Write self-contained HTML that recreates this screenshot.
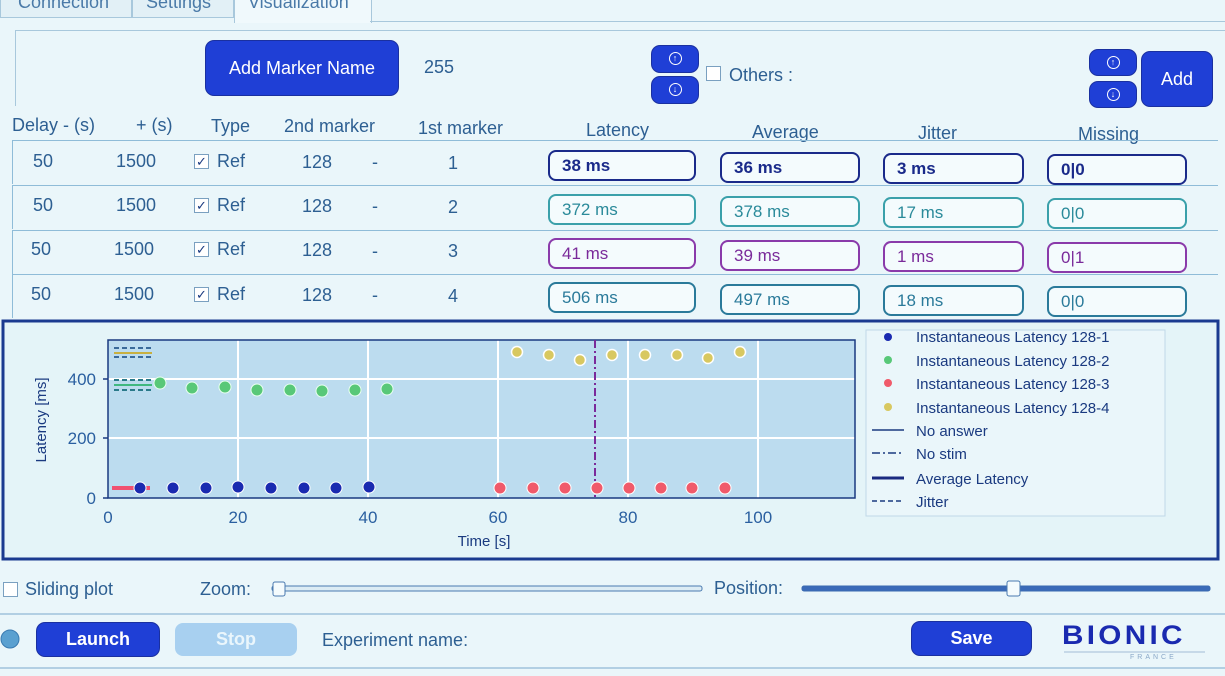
<!DOCTYPE html>
<html><head><meta charset="utf-8"><style>
body{margin:0;width:1225px;height:676px;background:#eaf6fa;font-family:"Liberation Sans",sans-serif;color:#2d5f92;position:relative;overflow:hidden}
.a{position:absolute;white-space:nowrap}
.btn{position:absolute;background:#1f3fd6;color:#fff;border-radius:8px;font-weight:bold;text-align:center;box-shadow:0 0 0 1px #1a30a0}
.box{position:absolute;height:31px;border:2px solid;border-radius:8px;box-sizing:border-box;font-size:17px;line-height:27px;padding-left:12px;background:#f4fbfd}
.row{position:absolute;left:12px;width:1205px;height:43px;border-top:1px solid #8fbcd8;border-left:1px solid #8fbcd8}
.cb{position:absolute;width:13px;height:13px;border:1px solid #7aa0c0;background:#fff;font-size:13px;line-height:13px;text-align:center;color:#1a3a80}
.t{font-size:18px}
.ic{display:inline-block;width:11px;height:11px;border:1.5px solid #fff;border-radius:50%;font-size:9px;line-height:11px;vertical-align:middle}
</style></head><body>
<div class="a" style="left:0;top:-10px;width:130px;height:26px;border:1px solid #a8c8dc;background:#e2f0f6"></div>
<div class="a t" style="left:18px;top:-8px;color:#4a7aa8">Connection</div>
<div class="a" style="left:132px;top:-10px;width:100px;height:26px;border:1px solid #a8c8dc;background:#e2f0f6"></div>
<div class="a t" style="left:146px;top:-8px;color:#4a7aa8">Settings</div>
<div class="a" style="left:234px;top:-10px;width:136px;height:32px;border:1px solid #a8c8dc;border-bottom:none;background:#f0f9fc"></div>
<div class="a t" style="left:248px;top:-8px;color:#4a7aa8">Visualization</div>
<div class="a" style="left:370px;top:21px;width:855px;border-top:1px solid #a8c8dc"></div>
<div class="a" style="left:15px;top:30px;width:1210px;height:75px;border-top:1px solid #a8c8dc;border-left:1px solid #a8c8dc"></div>

<div class="btn" style="left:206px;top:41px;width:192px;height:54px;line-height:54px;font-size:18px;font-weight:normal">Add Marker Name</div>
<div class="a t" style="left:424px;top:57px;color:#2d5f92">255</div>
<div class="btn" style="left:652px;top:46px;width:46px;height:26px;line-height:26px"><span class="ic">↑</span></div>
<div class="btn" style="left:652px;top:77px;width:46px;height:26px;line-height:26px"><span class="ic">↓</span></div>
<div class="cb" style="left:706px;top:66px"></div>
<div class="a t" style="left:729px;top:65px">Others :</div>
<div class="btn" style="left:1090px;top:50px;width:46px;height:25px;line-height:25px"><span class="ic">↑</span></div>
<div class="btn" style="left:1090px;top:82px;width:46px;height:25px;line-height:25px"><span class="ic">↓</span></div>
<div class="btn" style="left:1142px;top:52px;width:70px;height:54px;line-height:54px;font-size:18px;font-weight:normal">Add</div>

<div class="a t" style="left:12px;top:115px">Delay - (s)</div>
<div class="a t" style="left:136px;top:115px">+ (s)</div>
<div class="a t" style="left:211px;top:116px">Type</div>
<div class="a t" style="left:284px;top:116px">2nd marker</div>
<div class="a t" style="left:418px;top:118px">1st marker</div>
<div class="a t" style="left:586px;top:120px">Latency</div>
<div class="a t" style="left:752px;top:122px">Average</div>
<div class="a t" style="left:918px;top:123px">Jitter</div>
<div class="a t" style="left:1078px;top:124px">Missing</div>

<div class="row" style="top:140px"></div>
<div class="row" style="top:185px"></div>
<div class="row" style="top:230px"></div>
<div class="row" style="top:274px"></div>

<div class="a t" style="left:33px;top:151px">50</div><div class="a t" style="left:116px;top:151px">1500</div>
<div class="cb" style="left:194px;top:154px">✓</div><div class="a t" style="left:217px;top:151px">Ref</div>
<div class="a t" style="left:302px;top:152px">128</div><div class="a t" style="left:372px;top:152px">-</div><div class="a t" style="left:448px;top:153px">1</div>
<div class="box" style="left:548px;top:150px;width:148px;color:#1a2a8a;border-color:#1a2a8a;font-weight:bold">38 ms</div>
<div class="box" style="left:720px;top:152px;width:140px;color:#1a2a8a;border-color:#1a2a8a;font-weight:bold">36 ms</div>
<div class="box" style="left:883px;top:153px;width:141px;color:#1a2a8a;border-color:#1a2a8a;font-weight:bold">3 ms</div>
<div class="box" style="left:1047px;top:154px;width:140px;color:#1a2a8a;border-color:#1a2a8a;font-weight:bold">0|0</div>
<div class="a t" style="left:33px;top:195px">50</div><div class="a t" style="left:116px;top:195px">1500</div>
<div class="cb" style="left:194px;top:198px">✓</div><div class="a t" style="left:217px;top:195px">Ref</div>
<div class="a t" style="left:302px;top:196px">128</div><div class="a t" style="left:372px;top:196px">-</div><div class="a t" style="left:448px;top:197px">2</div>
<div class="box" style="left:548px;top:194px;width:148px;color:#2a8a9a;border-color:#3aa0aa">372 ms</div>
<div class="box" style="left:720px;top:196px;width:140px;color:#2a8a9a;border-color:#3aa0aa">378 ms</div>
<div class="box" style="left:883px;top:197px;width:141px;color:#2a8a9a;border-color:#3aa0aa">17 ms</div>
<div class="box" style="left:1047px;top:198px;width:140px;color:#2a8a9a;border-color:#3aa0aa">0|0</div>
<div class="a t" style="left:31px;top:239px">50</div><div class="a t" style="left:114px;top:239px">1500</div>
<div class="cb" style="left:194px;top:242px">✓</div><div class="a t" style="left:217px;top:239px">Ref</div>
<div class="a t" style="left:302px;top:240px">128</div><div class="a t" style="left:372px;top:241px">-</div><div class="a t" style="left:448px;top:241px">3</div>
<div class="box" style="left:548px;top:238px;width:148px;color:#7a2a9a;border-color:#8a3aaa">41 ms</div>
<div class="box" style="left:720px;top:240px;width:140px;color:#7a2a9a;border-color:#8a3aaa">39 ms</div>
<div class="box" style="left:883px;top:241px;width:141px;color:#7a2a9a;border-color:#8a3aaa">1 ms</div>
<div class="box" style="left:1047px;top:242px;width:140px;color:#7a2a9a;border-color:#8a3aaa">0|1</div>
<div class="a t" style="left:31px;top:284px">50</div><div class="a t" style="left:114px;top:284px">1500</div>
<div class="cb" style="left:194px;top:287px">✓</div><div class="a t" style="left:217px;top:284px">Ref</div>
<div class="a t" style="left:302px;top:285px">128</div><div class="a t" style="left:372px;top:285px">-</div><div class="a t" style="left:448px;top:286px">4</div>
<div class="box" style="left:548px;top:282px;width:148px;color:#2a7a9a;border-color:#2a7a9a">506 ms</div>
<div class="box" style="left:720px;top:284px;width:140px;color:#2a7a9a;border-color:#2a7a9a">497 ms</div>
<div class="box" style="left:883px;top:285px;width:141px;color:#2a7a9a;border-color:#2a7a9a">18 ms</div>
<div class="box" style="left:1047px;top:286px;width:140px;color:#2a7a9a;border-color:#2a7a9a">0|0</div>

<svg class="a" style="left:0;top:0" width="1225" height="676" font-family="Liberation Sans, sans-serif">
<rect x="3" y="321" width="1215" height="238" fill="#e4f4f8" stroke="#1a3a90" stroke-width="3"/>
<rect x="108" y="340" width="747" height="158" fill="#bcdcef"/>
<g stroke="#fff" stroke-width="2">
<line x1="238" y1="340" x2="238" y2="498"/><line x1="368" y1="340" x2="368" y2="498"/><line x1="498" y1="340" x2="498" y2="498"/><line x1="628" y1="340" x2="628" y2="498"/><line x1="758" y1="340" x2="758" y2="498"/>
<line x1="108" y1="379" x2="855" y2="379"/><line x1="108" y1="438" x2="855" y2="438"/>
</g>
<rect x="108" y="340" width="747" height="158" fill="none" stroke="#1a3a80" stroke-width="1.5"/>
<g stroke="#1a3a80" stroke-width="1.5"><line x1="103" y1="379" x2="108" y2="379"/><line x1="103" y1="438" x2="108" y2="438"/><line x1="103" y1="498" x2="108" y2="498"/></g>
<g fill="#2a5fa0" font-size="17" text-anchor="end"><text x="96" y="385">400</text><text x="96" y="444">200</text><text x="96" y="504">0</text></g>
<g fill="#2a5fa0" font-size="17" text-anchor="middle"><text x="108" y="523">0</text><text x="238" y="523">20</text><text x="368" y="523">40</text><text x="498" y="523">60</text><text x="628" y="523">80</text><text x="758" y="523">100</text></g>
<text x="484" y="546" fill="#1a3a80" font-size="15" text-anchor="middle">Time [s]</text>
<text transform="translate(46,420) rotate(-90)" fill="#1a3a80" font-size="15" text-anchor="middle">Latency [ms]</text>
<g stroke-width="2"><line x1="114" y1="348" x2="152" y2="348" stroke="#3a6a9a" stroke-dasharray="5 3"/><line x1="114" y1="353" x2="152" y2="353" stroke="#c8b040"/><line x1="114" y1="357" x2="152" y2="357" stroke="#3a6a9a" stroke-dasharray="5 3"/>
<line x1="114" y1="380" x2="152" y2="380" stroke="#2a7a8a" stroke-dasharray="5 3"/><line x1="114" y1="385" x2="152" y2="385" stroke="#40b880"/><line x1="114" y1="390" x2="152" y2="390" stroke="#2a7a8a" stroke-dasharray="5 3"/>
<line x1="112" y1="488" x2="150" y2="488" stroke="#f05070" stroke-width="4"/></g>
<line x1="595" y1="340" x2="595" y2="498" stroke="#7a2a9a" stroke-width="2" stroke-dasharray="8 3 2 3"/>
<g fill="#1a2ab0" stroke="#fff" stroke-width="1"><circle cx="140" cy="488" r="6"/><circle cx="173" cy="488" r="6"/><circle cx="206" cy="488" r="6"/><circle cx="238" cy="487" r="6"/><circle cx="271" cy="488" r="6"/><circle cx="304" cy="488" r="6"/><circle cx="336" cy="488" r="6"/><circle cx="369" cy="487" r="6"/></g>
<g fill="#58c878" stroke="#e8fff0" stroke-width="1"><circle cx="160" cy="383" r="6"/><circle cx="192" cy="388" r="6"/><circle cx="225" cy="387" r="6"/><circle cx="257" cy="390" r="6"/><circle cx="290" cy="390" r="6"/><circle cx="322" cy="391" r="6"/><circle cx="355" cy="390" r="6"/><circle cx="387" cy="389" r="6"/></g>
<g fill="#f05a6a" stroke="#fff" stroke-width="1"><circle cx="500" cy="488" r="6"/><circle cx="533" cy="488" r="6"/><circle cx="565" cy="488" r="6"/><circle cx="597" cy="488" r="6"/><circle cx="629" cy="488" r="6"/><circle cx="661" cy="488" r="6"/><circle cx="692" cy="488" r="6"/><circle cx="725" cy="488" r="6"/></g>
<g fill="#d8c860" stroke="#fff" stroke-width="1.5"><circle cx="517" cy="352" r="5.5"/><circle cx="549" cy="355" r="5.5"/><circle cx="580" cy="360" r="5.5"/><circle cx="612" cy="355" r="5.5"/><circle cx="645" cy="355" r="5.5"/><circle cx="677" cy="355" r="5.5"/><circle cx="708" cy="358" r="5.5"/><circle cx="740" cy="352" r="5.5"/></g>
<rect x="866" y="330" width="299" height="186" fill="#eaf6fa" stroke="#c0d8e8"/>
<g font-size="15" fill="#1a3a80">
<circle cx="888" cy="337" r="4" fill="#1a2ab0"/><text x="916" y="342">Instantaneous Latency 128-1</text>
<circle cx="888" cy="360" r="4" fill="#58c878"/><text x="916" y="366">Instantaneous Latency 128-2</text>
<circle cx="888" cy="383" r="4" fill="#f05a6a"/><text x="916" y="389">Instantaneous Latency 128-3</text>
<circle cx="888" cy="407" r="4" fill="#d8c860"/><text x="916" y="413">Instantaneous Latency 128-4</text>
<line x1="872" y1="430" x2="904" y2="430" stroke="#1a3a80" stroke-width="1.5"/><text x="916" y="436">No answer</text>
<line x1="872" y1="453" x2="904" y2="453" stroke="#1a3a80" stroke-width="1.5" stroke-dasharray="8 3 2 3"/><text x="916" y="459">No stim</text>
<line x1="872" y1="478" x2="904" y2="478" stroke="#1a2a80" stroke-width="3"/><text x="916" y="484">Average Latency</text>
<line x1="872" y1="501" x2="904" y2="501" stroke="#1a3a80" stroke-width="1.5" stroke-dasharray="5 3"/><text x="916" y="507">Jitter</text>
</g>
<rect x="272" y="586" width="430" height="5" rx="2" fill="#dcecf4" stroke="#4a7ab0"/>
<rect x="273" y="582" width="12" height="14" rx="2" fill="#f4fbfd" stroke="#4a7ab0"/>
<rect x="802" y="586" width="408" height="5" rx="2" fill="#3a6ab8" stroke="#3a6ab0"/>
<rect x="1007" y="581" width="13" height="15" rx="2" fill="#f4fbfd" stroke="#4a7ab0"/>
<line x1="0" y1="614" x2="1225" y2="614" stroke="#7aa8cc"/>
<line x1="0" y1="668" x2="1225" y2="668" stroke="#7aa8cc"/>
<circle cx="10" cy="639" r="9" fill="#5aa0d0" stroke="#3a7ab0"/>
<line x1="1064" y1="652" x2="1205" y2="652" stroke="#8aa8c8" stroke-width="0.8"/>
</svg>
<div class="cb" style="left:3px;top:582px"></div>
<div class="a t" style="left:25px;top:579px">Sliding plot</div>
<div class="a t" style="left:200px;top:579px">Zoom:</div>
<div class="a t" style="left:714px;top:578px">Position:</div>
<div class="btn" style="left:37px;top:623px;width:122px;height:33px;line-height:33px;font-size:18px">Launch</div>
<div class="btn" style="left:175px;top:623px;width:122px;height:33px;line-height:33px;font-size:18px;background:#a8d0f0;box-shadow:none;color:#eaf6fc">Stop</div>
<div class="a t" style="left:322px;top:630px">Experiment name:</div>
<div class="btn" style="left:912px;top:622px;width:119px;height:33px;line-height:33px;font-size:18px">Save</div>
<div class="a" style="left:1062px;top:620px;font-size:27px;font-weight:bold;color:#1a2ab0;letter-spacing:3px;transform:scaleX(1.1);transform-origin:left">BIONIC</div>
<div class="a" style="left:1130px;top:654px;font-size:7px;letter-spacing:3px;color:#8aa8c8">FRANCE</div>
</body></html>
